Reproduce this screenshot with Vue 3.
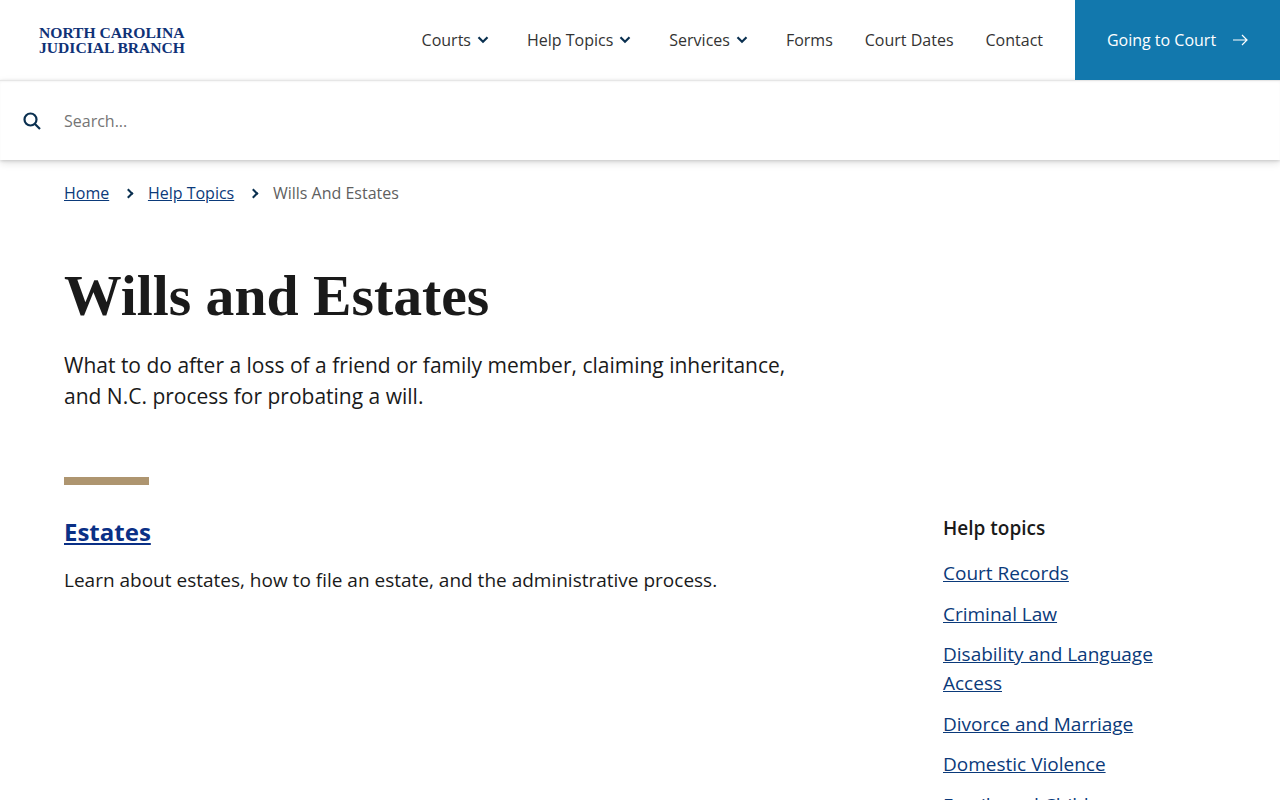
<script setup>
const nav = [
  { label: 'Courts', caret: true },
  { label: 'Help Topics', caret: true },
  { label: 'Services', caret: true },
  { label: 'Forms' },
  { label: 'Court Dates' },
  { label: 'Contact' }
]
const topics = ['Court Records', 'Criminal Law', 'Disability and Language Access', 'Divorce and Marriage', 'Domestic Violence', 'Family and Children']
</script>

<template>
  <div class="page">
    <header class="header">
      <a class="logo"><span>NORTH CAROLINA</span><span>JUDICIAL BRANCH</span></a>
      <nav class="nav">
        <a v-for="n in nav" :key="n.label" class="nav-item">
          {{ n.label }}
          <svg v-if="n.caret" class="caret" viewBox="0 0 12 8" width="12" height="8"><path d="M1.500 1.300 6 5.800l4.500-4.500" fill="none" stroke="#0a3050" stroke-width="2.200"/></svg>
        </a>
      </nav>
      <a class="cta">
        Going to Court
        <svg viewBox="0 0 16 12" width="16" height="12"><path d="M1 6h14M10 1l5 5-5 5" fill="none" stroke="#fff" stroke-width="1.200"/></svg>
      </a>
    </header>
    <div class="search">
      <svg viewBox="0 0 18 18" width="18" height="18"><circle cx="7.500" cy="7.500" r="6" fill="none" stroke="#0a3050" stroke-width="2.200"/><path d="m12 12 5 5" stroke="#0a3050" stroke-width="2.200"/></svg>
      <span>Search...</span>
    </div>
    <main class="main">
      <div class="crumbs">
        <a>Home</a><i class="sep" /><a>Help Topics</a><i class="sep" /><span>Wills And Estates</span>
      </div>
      <h1>Wills and Estates</h1>
      <p class="lead">What to do after a loss of a friend or family member, claiming inheritance, and N.C. process for probating a will.</p>
      <div class="cols">
        <section class="content">
          <div class="rule" />
          <h2><a>Estates</a></h2>
          <p>Learn about estates, how to file an estate, and the administrative process.</p>
        </section>
        <aside class="side">
          <h3>Help topics</h3>
          <a v-for="t in topics" :key="t">{{ t }}</a>
        </aside>
      </div>
    </main>
  </div>
</template>

<style>
html, body { margin: 0; overflow: hidden; background: #fff; }
</style>
<style scoped>
.page { height: 800px; overflow: hidden; font-family: "Open Sans", sans-serif; color: #1a1a1a; }
.header { height: 80px; display: flex; align-items: center; justify-content: space-between; padding-left: 39px; }
.logo { display: flex; flex-direction: column; font-family: "Liberation Serif", serif; font-size: 15.600px; font-weight: 700; line-height: 15.500px; color: #0f3277; }
.nav { display: flex; margin-left: auto; gap: 32px; margin-right: 32px; }
.nav-item { display: flex; align-items: center; gap: 6px; font-size: 16px; color: #333; }
.caret { margin-right: 6px; }
.cta { width: 205px; height: 80px; box-sizing: border-box; background: #1278ad; color: #fff; display: flex; align-items: center; justify-content: center; gap: 16px; font-size: 16px; }
.search { height: 80px; box-sizing: border-box; padding: 2px 0 0 23px; display: flex; align-items: center; gap: 23px; font-size: 16px; color: #757575; box-shadow: inset 0 1px 0 #e6e6e6, inset 0 2px 2px rgba(0,0,0,.04), 0 1px 3px rgba(0,0,0,.15), 0 3px 8px rgba(0,0,0,.12); }
.main { padding: 0 64px; }
.crumbs { display: flex; align-items: center; margin-top: 22px; font-size: 16px; line-height: 22px; color: #5f5f5f; }
.crumbs a { color: #0b3a7a; text-decoration: underline; }
.sep { width: 5px; height: 5px; margin: 0 16px 0 15.700px; border-top: 2px solid #0a3050; border-right: 2px solid #0a3050; transform: rotate(45deg); }
h1 { margin: 57px 0 0; font-family: "Liberation Serif", serif; font-size: 57.700px; line-height: 70px; font-weight: 700; color: #1a1a1a; }
.lead { margin: 19px 0 0; width: 740px; font-size: 21px; line-height: 31px; }
.cols { display: flex; justify-content: space-between; margin-top: 65px; }
.rule { width: 85px; height: 8px; background: #ae9570; }
h2 { margin: 30px 0 0; font-size: 24px; line-height: 34px; font-weight: 700; }
h2 a { color: #0a3086; text-decoration: underline; }
.content p { margin: 16px 0 0; font-size: 19px; line-height: 30px; }
.side { width: 273px; display: flex; flex-direction: column; padding-top: 36px; font-size: 19px; line-height: 29px; }
.side h3 { margin: 0 0 16.200px; font-size: 19px; line-height: 30px; font-weight: 600; }
.side a { color: #0b3a7a; text-decoration: underline; margin-bottom: 11.500px; }
</style>
